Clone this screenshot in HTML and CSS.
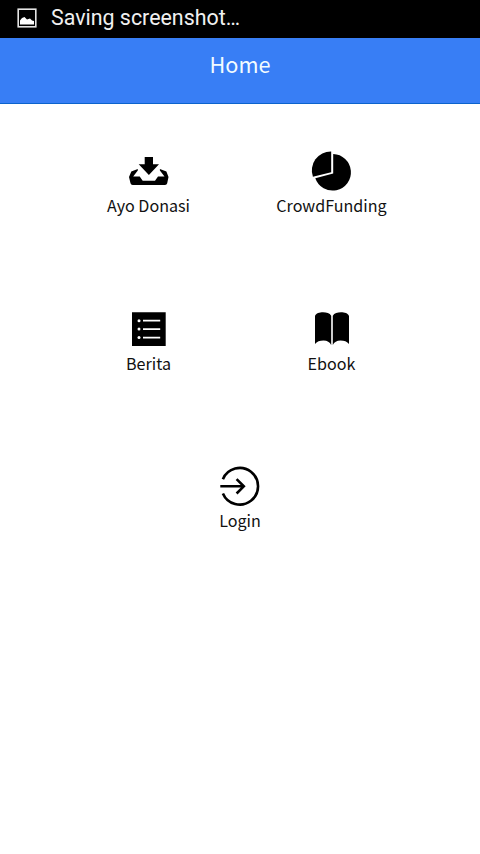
FILE: index.html
```html
<!DOCTYPE html>
<html lang="id">
<head>
<meta charset="utf-8">
<title>Home</title>
<link rel="stylesheet" href="styles.css">
</head>
<body>
<div class="status">
  <svg class="status-icon" width="20" height="20" viewBox="0 0 20 20"><rect x="1.200" y="1.200" width="17.600" height="17.600" fill="none" stroke="#e4e4e4" stroke-width="1.600"/><path d="M3 16.500v-4l2-2.500 2.500-1 2.500 2.500 3-1 2 2 2 .5v3.500z" fill="#fff"/></svg>
  <span class="status-text">Saving screenshot…</span>
</div>
<header class="bar"><h1 class="title">Home</h1></header>
<main class="menu">
  <a class="item">
    <svg class="icon" viewBox="-.5 0 40 40"><path d="M16.200 6h8.300v7.300h6L20.400 24 10.200 13.300h6z"/><path d="M9.300 18L2.800 20.500.5 26 2 32.200Q2.400 34 4.200 34H36.500Q38.300 34 38.700 32.200L40 26 37.900 20.500 31.400 18V19.500L36 25.500H29.500L26.500 29.800H14.200L11.200 25.500H4.700L9.300 19.500z"/></svg>
    <span class="label">Ayo Donasi</span>
  </a>
  <a class="item">
    <svg class="icon" viewBox="-.5 0 40 40"><path d="M19.700.5A19 19 0 0 0 1.400 25.800L19.700 21.200z"/><path d="M21.700 3A18.300 18.300 0 1 1 3.800 27.200L21.700 22.600z"/></svg>
    <span class="label">CrowdFunding</span>
  </a>
  <a class="item">
    <svg class="icon" viewBox="-.5 0 40 40"><path d="M3.500 3.300h33.700v33.700H3.500z"/><path d="M14.500 11.700h17.200M14.500 20.100h17.200M14.500 28.600h17.200" stroke="#fff" stroke-width="1.700"/><g fill="#fff"><circle cx="10.500" cy="11.700" r="1.500"/><circle cx="10.500" cy="20.100" r="1.500"/><circle cx="10.500" cy="28.600" r="1.500"/></g></svg>
    <span class="label">Berita</span>
  </a>
  <a class="item">
    <svg class="icon" viewBox="-.5 0 40 40"><path d="M3.500 35V7C4.500 4.300 8 3.300 11.500 3.300s6.800.9 8.200 3.400V36c-1.400-2.900-4-4.500-7.700-4.500-3.600 0-6.700 1-8.500 3.500zM37.500 35V7c-1-2.700-4.500-3.700-8-3.700s-6.800.9-8.200 3.400V36c1.400-2.900 4-4.500 7.700-4.500 3.600 0 6.700 1 8.500 3.500z"/></svg>
    <span class="label">Ebook</span>
  </a>
  <a class="item wide">
    <svg class="icon" viewBox=".7 0 40 40"><path d="M3.600 13.200A18.300 18.300 0 1 1 3.600 27.400M1 20.300H24.500M17.300 13.100l7.200 7.200-7.200 7.200" fill="none" stroke="#000" stroke-width="2.600"/></svg>
    <span class="label">Login</span>
  </a>
</main>
</body>
</html>
```

FILE: styles.css
```css
* { box-sizing: border-box; }
body {
  margin: 0;
  min-height: 854px;
  background: #fff;
  color: #111;
  font-family: "Noto Sans CJK SC", "Noto Sans", sans-serif;
}
.status {
  display: flex;
  align-items: center;
  gap: 14px;
  height: 38px;
  padding: 0 17px 2px;
  background: #000;
  color: #f0f0f0;
  font: 21.4px/26px Roboto, sans-serif;
}
.bar {
  height: 66px;
  padding-top: 9px;
  background: #387ef5;
  border-bottom: 1px solid #0c63cc;
}
.title {
  margin: 0;
  color: #f2fbff;
  font-size: 21.7px;
  font-weight: 400;
  line-height: 34px;
  text-align: center;
}
.menu {
  display: grid;
  grid-template-columns: 183px 183px;
  grid-auto-rows: 157.5px;
  justify-content: center;
  padding-top: 47px;
}
.item {
  display: flex;
  flex-direction: column;
  align-items: center;
}
.wide { grid-column: 1 / -1; }
.icon {
  width: 40px;
  height: 40px;
  margin-right: 1px;
  overflow: visible;
}
.label {
  margin-top: 1px;
  font-size: 16.1px;
  line-height: 26px;
}
```
